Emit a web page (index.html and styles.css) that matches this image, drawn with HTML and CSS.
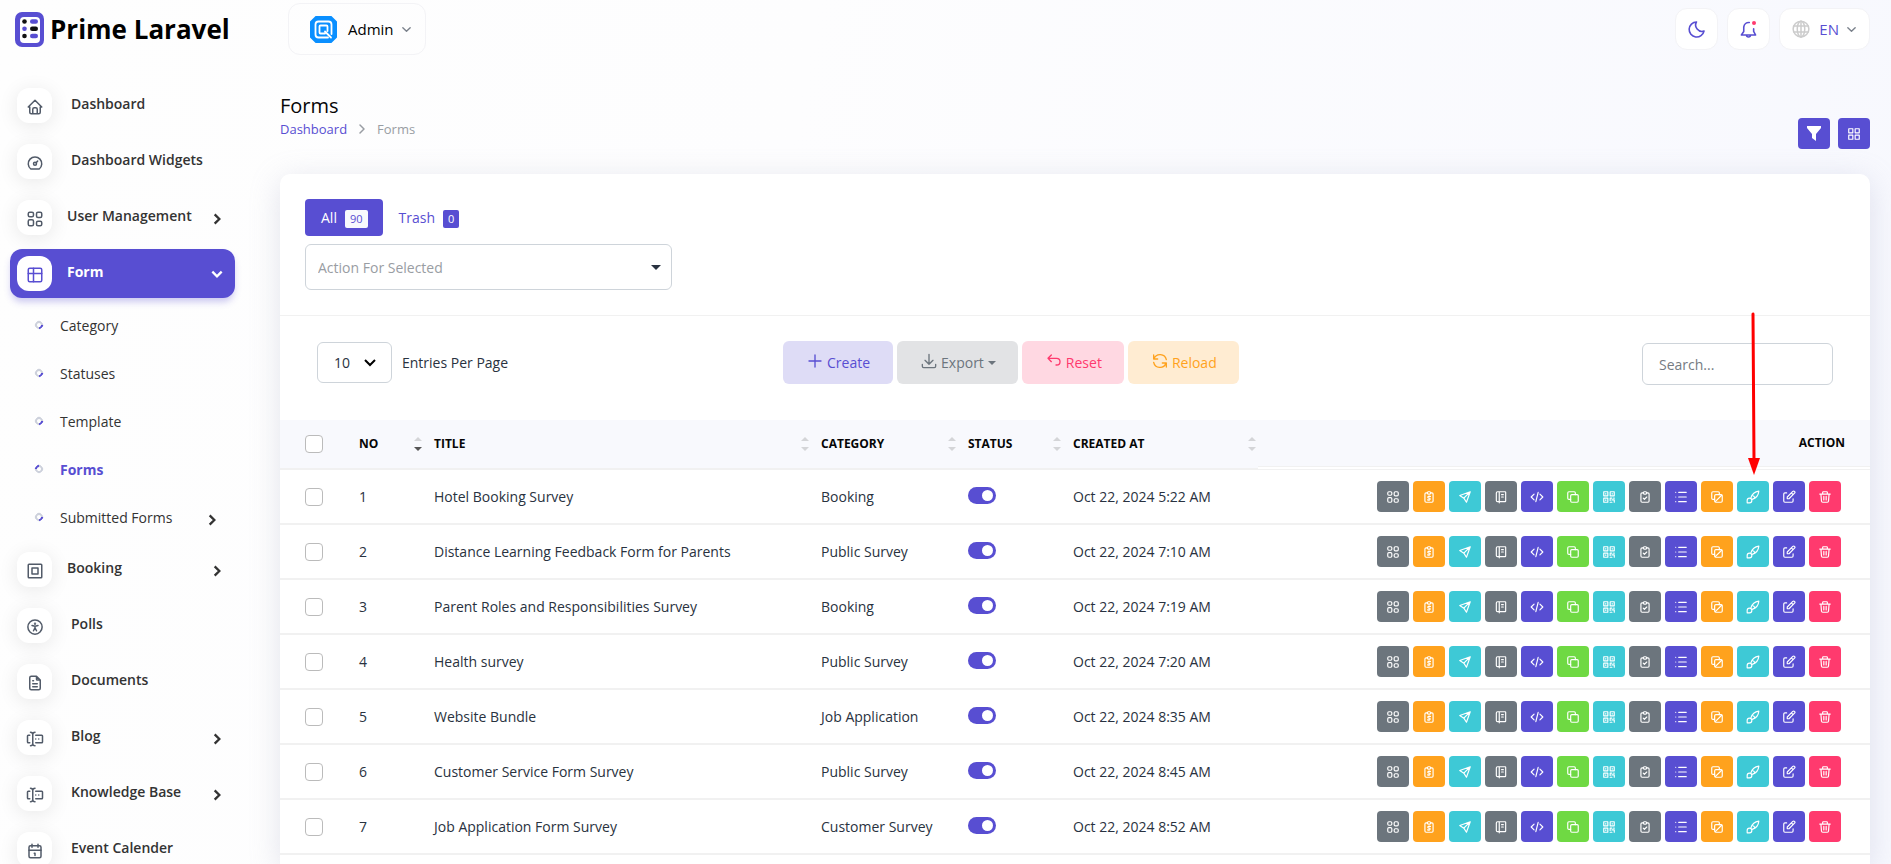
FILE: index.html
```
<!DOCTYPE html>
<html lang="en">
  <head>
    <meta charset="UTF-8" />
    <meta name="viewport" content="width=device-width, initial-scale=1.0" />
    <title>Forms | Prime Laravel</title>
    <link rel="stylesheet" href="styles.css">
  </head>
  <body>
    <!-- icon set -->
    <svg class="sprite" aria-hidden="true">
      <symbol id="home" viewBox="0 0 24 24"><path d="M5 12H3l9-9 9 9h-2M5 12v7a2 2 0 0 0 2 2h10a2 2 0 0 0 2-2v-7M9 21v-6a2 2 0 0 1 2-2h2a2 2 0 0 1 2 2v6"/></symbol>
      <symbol id="gauge" viewBox="0 0 24 24"><circle cx="12" cy="13" r="2"/><path d="M13.4 11.6l2.1-2.1M6.4 20a9 9 0 1 1 11.2 0z"/></symbol>
      <symbol id="users" viewBox="0 0 24 24"><rect x="3" y="3" width="7" height="6" rx="2"/><rect x="14" y="3" width="7" height="7" rx="2"/><rect x="3" y="13" width="7" height="8" rx="2"/><rect x="14" y="15" width="7" height="6" rx="2"/></symbol>
      <symbol id="table" viewBox="0 0 24 24"><rect x="3" y="3" width="18" height="18" rx="2"/><path d="M3 10h18M10 3v18"/></symbol>
      <symbol id="booking" viewBox="0 0 24 24"><rect x="3" y="3" width="18" height="18" rx="1"/><rect x="8" y="8" width="8" height="8"/></symbol>
      <symbol id="polls" viewBox="0 0 24 24"><circle cx="12" cy="12" r="9.500"/><path d="M10 17l2-4 2 4M8 10l4 1 4-1M12 11v2"/><circle cx="12" cy="7.500" r=".6"/></symbol>
      <symbol id="file" viewBox="0 0 24 24"><path d="M14 3v4a1 1 0 0 0 1 1h4M17 21H7a2 2 0 0 1-2-2V5a2 2 0 0 1 2-2h7l5 5v11a2 2 0 0 1-2 2zM9 9h1M9 13h6M9 17h6"/></symbol>
      <symbol id="forms" viewBox="0 0 24 24"><path d="M12 3a3 3 0 0 0-3 3v12a3 3 0 0 0 3 3M6 3a3 3 0 0 1 3 3v12a3 3 0 0 1-3 3M13 7h8a1 1 0 0 1 1 1v8a1 1 0 0 1-1 1h-8M5 7H3a1 1 0 0 0-1 1v8a1 1 0 0 0 1 1h2M17 12h.01M13 12h.01"/></symbol>
      <symbol id="calendar" viewBox="0 0 24 24"><rect x="4" y="5" width="16" height="16" rx="2"/><path d="M16 3v4M8 3v4M4 11h16M11 15h1v3"/></symbol>
      <symbol id="down" viewBox="0 0 24 24"><path d="M4 8l8 8 8-8"/></symbol>
      <symbol id="right" viewBox="0 0 24 24"><path d="M8 4l8 8-8 8"/></symbol>
      <symbol id="moon" viewBox="0 0 24 24"><path d="M12 2.500A9.500 9.500 0 1 0 21.500 14 8 8 0 0 1 12 2.500z"/></symbol>
      <symbol id="bell" viewBox="0 0 24 24"><path d="M13 3.200A6.500 6.500 0 0 0 6 9v5.500L3 19h18l-2.500-4.500V11M9.500 19a2.500 2.500 0 0 0 5 0"/></symbol>
      <symbol id="globe" viewBox="0 0 24 24"><circle cx="12" cy="12" r="10.500"/><ellipse cx="12" cy="12" rx="5" ry="10.500"/><path d="M12 1.500v21M2.500 8h19M2.500 16h19"/></symbol>
      <symbol id="grid" viewBox="0 0 24 24"><path d="M3 3h7v7H3zM14 3h7v7h-7zM3 14h7v7H3zM14 14h7v7h-7z"/></symbol>
      <symbol id="plus" viewBox="0 0 24 24"><path d="M12 3v18M3 12h18"/></symbol>
      <symbol id="download" viewBox="0 0 24 24"><path d="M2 17v3a2 2 0 0 0 2 2h16a2 2 0 0 0 2-2v-3M6 11l6 6 6-6M12 2v15"/></symbol>
      <symbol id="undo" viewBox="0 0 24 24"><path d="M8 13L3 8l5-5M3 8h13a5 5 0 0 1 0 10h-1"/></symbol>
      <symbol id="reload" viewBox="0 0 24 24"><path d="M21.500 10A9.700 9.700 0 0 0 3 8.500M2.500 3v6h6M2.500 14A9.700 9.700 0 0 0 21 15.500M21.500 21v-6h-6"/></symbol>
      <symbol id="money" viewBox="0 0 24 24"><path d="M9 5H7a2 2 0 0 0-2 2v12a2 2 0 0 0 2 2h10a2 2 0 0 0 2-2V7a2 2 0 0 0-2-2h-2"/><rect x="9" y="3" width="6" height="4" rx="2"/><path d="M14.500 11h-3a1.500 1.500 0 0 0 0 3h1a1.500 1.500 0 0 1 0 3h-3M12 17v1M12 10v1"/></symbol>
      <symbol id="send" viewBox="0 0 24 24"><path d="M10 14L21 3M21 3l-6.500 18-4.500-7-7-4.500z"/></symbol>
      <symbol id="notebook" viewBox="0 0 24 24"><path d="M6 3h13a1 1 0 0 1 1 1v15a1 1 0 0 1-1 1H6a2 2 0 0 1-2-2V5a2 2 0 0 1 2-2M9 3v19M13 8h3M13 12h3"/></symbol>
      <symbol id="code" viewBox="0 0 24 24"><path d="M7 7l-5 5 5 5M17 7l5 5-5 5M14 4l-4 16"/></symbol>
      <symbol id="copy" viewBox="0 0 24 24"><rect x="8" y="8" width="13" height="13" rx="2"/><path d="M16 8V5a2 2 0 0 0-2-2H5a2 2 0 0 0-2 2v9a2 2 0 0 0 2 2h3"/></symbol>
      <symbol id="qrcode" viewBox="0 0 24 24"><path d="M3 3h7v7H3zM14 3h7v7h-7zM3 14h7v7H3zM6.500 6v1M17.500 6v1M6.500 17v1M14 14h3M20 14h1M14 14v4M14 21h3M17 17h4v4"/></symbol>
      <symbol id="check" viewBox="0 0 24 24"><path d="M9 5H7a2 2 0 0 0-2 2v12a2 2 0 0 0 2 2h10a2 2 0 0 0 2-2V7a2 2 0 0 0-2-2h-2"/><rect x="9" y="3" width="6" height="4" rx="2"/><path d="M9 14l2 2 4-4"/></symbol>
      <symbol id="list" viewBox="0 0 24 24"><path d="M8 4h13M8 12h13M8 20h13M3 4h.01M3 12h.01M3 20h.01"/></symbol>
      <symbol id="layers" viewBox="0 0 24 24"><rect x="8" y="8" width="13" height="13" rx="2"/><path d="M16 8V5a2 2 0 0 0-2-2H5a2 2 0 0 0-2 2v9a2 2 0 0 0 2 2h3M9 20L20 9"/></symbol>
      <symbol id="brush" viewBox="0 0 24 24"><path d="M2 22v-4a4 4 0 1 1 4 4zM22 2A16 16 0 0 0 8.500 13.500M22 2A16 16 0 0 1 10.500 16M11 9a9 9 0 0 1 4.500 4.500"/></symbol>
      <symbol id="edit" viewBox="0 0 24 24"><path d="M8 5H5a2 2 0 0 0-2 2v12a2 2 0 0 0 2 2h12a2 2 0 0 0 2-2v-4M9 15h3l9.500-9.500a2.100 2.100 0 0 0-3-3L9 12zM16 5l3 3"/></symbol>
      <symbol id="trash" viewBox="0 0 24 24"><path d="M3 7h18M10 11v6M14 11v6M5 7l1 12a2 2 0 0 0 2 2h8a2 2 0 0 0 2-2l1-12M8 7V4a1 1 0 0 1 1-1h6a1 1 0 0 1 1 1v3"/></symbol>
    </svg>

    <div class="app">
      <aside class="sidebar">
        <a class="brand" href="#">
          <svg class="brand-icon" viewBox="0 0 29 35">
            <rect width="29" height="35" rx="7" fill="#584ed2"/>
            <rect x="5" y="5" width="20" height="26" rx="4" fill="#fff"/>
            <g fill="#111"><circle cx="9.500" cy="9.500" r="2.300"/><rect x="15" y="14.500" width="8" height="4.400" rx="2.200"/><circle cx="9.500" cy="24" r="2.300"/></g>
            <g fill="#584ed2"><rect x="15" y="7.300" width="8" height="4.400" rx="2.200"/><circle cx="9.500" cy="16.700" r="2.300"/><rect x="15" y="21.800" width="8" height="4.400" rx="2.200"/></g>
          </svg>
          <span>Prime Laravel</span>
        </a>
        <nav class="menu">
          <a class="menu-link" href="#"><span class="menu-icon"><svg><use href="#home"/></svg></span><span class="menu-text">Dashboard</span></a>
          <a class="menu-link" href="#"><span class="menu-icon"><svg><use href="#gauge"/></svg></span><span class="menu-text">Dashboard Widgets</span></a>
          <a class="menu-link tight" href="#"><span class="menu-icon"><svg><use href="#users"/></svg></span><span class="menu-text">User Management</span><svg class="arrow"><use href="#right"/></svg></a>
          <a class="menu-link tight active" href="#"><span class="menu-icon"><svg><use href="#table"/></svg></span><span class="menu-text">Form</span><svg class="arrow"><use href="#down"/></svg></a>
          <div class="submenu">
            <a href="#"><i class="dot"></i><span>Category</span></a>
            <a href="#"><i class="dot"></i><span>Statuses</span></a>
            <a href="#"><i class="dot"></i><span>Template</span></a>
            <a href="#" class="current"><i class="dot"></i><span>Forms</span></a>
            <a href="#"><i class="dot"></i><span>Submitted Forms</span><svg class="arrow"><use href="#right"/></svg></a>
          </div>
          <a class="menu-link tight" href="#"><span class="menu-icon"><svg><use href="#booking"/></svg></span><span class="menu-text">Booking</span><svg class="arrow"><use href="#right"/></svg></a>
          <a class="menu-link" href="#"><span class="menu-icon"><svg><use href="#polls"/></svg></span><span class="menu-text">Polls</span></a>
          <a class="menu-link" href="#"><span class="menu-icon"><svg><use href="#file"/></svg></span><span class="menu-text">Documents</span></a>
          <a class="menu-link" href="#"><span class="menu-icon"><svg><use href="#forms"/></svg></span><span class="menu-text">Blog</span><svg class="arrow"><use href="#right"/></svg></a>
          <a class="menu-link" href="#"><span class="menu-icon"><svg><use href="#forms"/></svg></span><span class="menu-text">Knowledge Base</span><svg class="arrow"><use href="#right"/></svg></a>
          <a class="menu-link" href="#"><span class="menu-icon"><svg><use href="#calendar"/></svg></span><span class="menu-text">Event Calender</span></a>
        </nav>
      </aside>

      <main class="main">
        <header class="topbar">
          <button class="top-btn user-btn">
            <svg class="avatar" viewBox="0 0 27 27">
              <path d="M7 0h13l7 7v13l-7 7H7l-7-7V7z" fill="#0a8fff" stroke="#0a8fff" stroke-linejoin="round"/>
              <path d="M21.500 18V8.500a3 3 0 0 0-3-3h-10a3 3 0 0 0-3 3v10a3 3 0 0 0 3 3H18" fill="none" stroke="#fff" stroke-width="1.800"/>
              <path d="M15 17.500H10.500a1 1 0 0 1-1-1v-6a1 1 0 0 1 1-1h6a1 1 0 0 1 1 1V15M15 15.500l6 6" fill="none" stroke="#fff" stroke-width="1.800"/>
            </svg>
            <span>Admin</span>
            <svg class="caret"><use href="#down"/></svg>
          </button>
          <div class="top-right">
            <button class="top-btn icon-btn" aria-label="Dark mode"><svg><use href="#moon"/></svg></button>
            <button class="top-btn icon-btn" aria-label="Notifications"><svg><use href="#bell"/></svg><span class="notify"></span></button>
            <button class="top-btn lang-btn"><svg class="globe"><use href="#globe"/></svg><span>EN</span><svg class="caret"><use href="#down"/></svg></button>
          </div>
        </header>

        <div class="page-header">
          <div class="page-title">
            <h1>Forms</h1>
            <nav class="breadcrumb"><a href="#">Dashboard</a><svg><use href="#right"/></svg><span>Forms</span></nav>
          </div>
          <div class="page-actions">
            <button class="act purple" aria-label="Filter"><svg class="filter" viewBox="0 0 14 15"><path d="M0 0h14v2L9 8v7l-4-3V8L0 2z"/></svg></button>
            <button class="act purple" aria-label="Grid view"><svg><use href="#grid"/></svg></button>
          </div>
        </div>

        <section class="card">
          <div class="card-top">
            <div class="tabs">
              <a class="tab selected" href="#">All <span class="badge">90</span></a>
              <a class="tab" href="#">Trash <span class="badge">0</span></a>
            </div>
            <select class="bulk" aria-label="Action For Selected">
              <option>Action For Selected</option>
            </select>
          </div>
          <div class="toolbar">
            <label class="entries">
              <select class="page-size">
                <option>10</option>
              </select>
              Entries Per Page
            </label>
            <div class="tools">
              <button class="tool create"><svg><use href="#plus"/></svg>Create</button>
              <button class="tool export"><svg><use href="#download"/></svg>Export<i class="tri"></i></button>
              <button class="tool reset"><svg><use href="#undo"/></svg>Reset</button>
              <button class="tool reload"><svg><use href="#reload"/></svg>Reload</button>
            </div>
            <div class="search"><input type="search" placeholder="Search..." aria-label="Search" /></div>
          </div>
          <table>
            <colgroup>
              <col class="c-check"><col class="c-no"><col><col class="c-cat"><col class="c-status"><col class="c-date"><col class="c-action">
            </colgroup>
            <thead>
              <tr>
                <th class="first"><input type="checkbox" class="tick" aria-label="Select all" /></th>
                <th><div class="sort desc">No</div></th>
                <th><div class="sort">Title</div></th>
                <th><div class="sort">Category</div></th>
                <th><div class="sort">Status</div></th>
                <th><div class="sort">Created At</div></th>
                <th class="action-head"><div>Action</div></th>
              </tr>
            </thead>
            <tbody id="rows"></tbody>
          </table>
          <svg class="pointer" viewBox="0 0 14 164"><path d="M6 2l1 146" stroke="#f00" stroke-width="3" stroke-linecap="round"/><path d="M1 146h12L7 163z" fill="#f00"/></svg>
        </section>
      </main>
    </div>

    <script>
      const forms = [
        ['Hotel Booking Survey', 'Booking', '5:22'],
        ['Distance Learning Feedback Form for Parents', 'Public Survey', '7:10'],
        ['Parent Roles and Responsibilities Survey', 'Booking', '7:19'],
        ['Health survey', 'Public Survey', '7:20'],
        ['Website Bundle', 'Job Application', '8:35'],
        ['Customer Service Form Survey', 'Public Survey', '8:45'],
        ['Job Application Form Survey', 'Customer Survey', '8:52'],
      ];
      const actions = [
        ['users', 'gray', 'Integration'],
        ['money', 'orange', 'Payment'],
        ['send', 'cyan', 'Send'],
        ['notebook', 'gray', 'Rules'],
        ['code', 'purple', 'Embed'],
        ['copy', 'green', 'Copy link'],
        ['qrcode', 'cyan', 'QR code'],
        ['check', 'gray', 'Fill form'],
        ['list', 'purple', 'Submissions'],
        ['layers', 'orange', 'Duplicate'],
        ['brush', 'cyan', 'Theme'],
        ['edit', 'purple', 'Edit'],
        ['trash', 'red', 'Delete'],
      ];

      const buttons = actions
        .map(([icon, color, label]) => `<button class="act ${color}" aria-label="${label}"><svg><use href="#${icon}"/></svg></button>`)
        .join('');

      document.getElementById('rows').innerHTML = forms
        .map(
          ([title, category, time], i) => `<tr>
            <td class="first"><input type="checkbox" class="tick" aria-label="Select ${title}" /></td>
            <td>${i + 1}</td>
            <td>${title}</td>
            <td>${category}</td>
            <td><input type="checkbox" class="switch" role="switch" aria-label="Status of ${title}" checked /></td>
            <td>Oct 22, 2024 ${time} AM</td>
            <td><div class="actions">${buttons}</div></td>
          </tr>`
        )
        .join('');
    </script>
  </body>
</html>
```
FILE: styles.css
```
* {
  box-sizing: border-box;
}
body {
  margin: 0;
  font-family: "Open Sans", sans-serif;
  font-size: 14px;
  color: #293240;
  background: linear-gradient(100deg, #fefefe 0%, #fdfdfe 40%, #f7f8fe 100%);
}
a {
  color: #584ed2;
  text-decoration: none;
}
button, input, select {
  font: inherit;
  color: inherit;
}
button {
  border: none;
  padding: 0;
  cursor: pointer;
}
svg {
  fill: none;
  stroke: currentColor;
  stroke-width: 2;
  stroke-linecap: round;
  stroke-linejoin: round;
  flex-shrink: 0;
}
.sprite {
  position: absolute;
  width: 0;
  height: 0;
}
.app {
  display: flex;
  height: 100vh;
  overflow: hidden;
}

/* sidebar */
.sidebar {
  width: 280px;
  flex-shrink: 0;
}
.brand {
  display: flex;
  align-items: center;
  gap: 6px;
  height: 81px;
  padding: 0 15px 23px;
  color: #000;
  font-size: 26px;
  font-weight: 700;
}
.brand-icon {
  width: 29px;
  height: 35px;
  stroke: none;
}
.menu {
  width: 235px;
  padding-left: 10px;
}
.menu-link {
  display: flex;
  align-items: center;
  gap: 19px;
  height: 49px;
  margin-bottom: 7px;
  padding: 0 11px 0 7px;
  border-radius: 12px;
  color: #333;
  font-weight: 600;
}
.menu-link.tight {
  gap: 15px;
}
.menu-icon {
  display: flex;
  align-items: center;
  justify-content: center;
  width: 35px;
  height: 35px;
  padding-top: 3px;
  border-radius: 12px;
  background: #fff;
  color: #525b69;
  box-shadow: 0 3px 20px rgba(0, 0, 0, 0.09);
}
.menu-icon svg {
  width: 18px;
  height: 18px;
}
.menu-text {
  flex: 1;
  padding-bottom: 5px;
}
.arrow {
  width: 14px;
  height: 14px;
  stroke-width: 4;
  margin-top: 3px;
  stroke-linecap: butt;
  stroke-linejoin: miter;
}
.menu-link.active {
  margin-bottom: 0;
  background: #584ed2;
  color: #fff;
  font-weight: 700;
  box-shadow: 0 5px 7px -1px rgba(88, 78, 210, 0.3);
}
.menu-link.active .menu-icon {
  color: #584ed2;
  box-shadow: none;
}
.menu-link.active .arrow {
  margin-top: 0;
}
.submenu {
  padding: 4px 0 3px;
}
.submenu a {
  display: flex;
  align-items: center;
  height: 48px;
  padding: 0 16px 2px 25px;
  color: #333;
  font-weight: 500;
}
.submenu .arrow {
  margin-left: auto;
  margin-top: 6px;
}
.dot {
  width: 8px;
  height: 8px;
  margin-right: 17px;
  border: 2px solid #cdd1dc;
  border-bottom-color: #584ed2;
  border-radius: 50%;
  transform: rotate(-45deg);
}
.submenu .current {
  color: #584ed2;
  font-weight: 700;
}
.current .dot {
  transform: rotate(135deg);
}

/* top bar */
.main {
  flex: 1;
  min-width: 0;
  display: flex;
  flex-direction: column;
  padding-right: 21px;
}
.topbar {
  display: flex;
  align-items: center;
  justify-content: space-between;
  height: 58px;
  padding-left: 8px;
}
.top-btn {
  display: flex;
  align-items: center;
  justify-content: center;
  height: 42px;
  border: 1px solid #f3f3f6;
  border-radius: 12px;
  background: #fff;
  color: #584ed2;
}
.user-btn {
  height: 52px;
  padding: 0 13px 0 21px;
  background: transparent;
  color: #000;
  font-size: 15px;
  font-weight: 500;
}
.avatar {
  width: 27px;
  height: 27px;
  margin-right: 11px;
}
.caret {
  width: 11px;
  height: 11px;
  margin-left: 7px;
  color: #7b828c;
  stroke-width: 3;
}
.top-right {
  display: flex;
  gap: 9px;
}
.icon-btn {
  position: relative;
  width: 43px;
}
.icon-btn svg {
  width: 19px;
  height: 19px;
}
.notify {
  position: absolute;
  top: 12px;
  right: 13px;
  width: 4px;
  height: 4px;
  border-radius: 50%;
  background: #ff3a6e;
}
.lang-btn {
  padding: 0 12px;
  font-size: 15px;
}
.globe {
  width: 18px;
  height: 18px;
  margin-right: 9px;
  color: #ccc;
}

/* page header */
.page-header {
  display: flex;
  align-items: flex-end;
  justify-content: space-between;
  height: 116px;
  padding-bottom: 25px;
}
.page-title {
  margin-bottom: 9px;
}
.page-title h1 {
  margin: 0;
  color: #060606;
  font-size: 20px;
  font-weight: 500;
  line-height: 24px;
}
.breadcrumb {
  display: flex;
  align-items: center;
  gap: 9px;
  font-size: 13px;
  line-height: 22px;
  color: #999da3;
}
.breadcrumb svg {
  width: 12px;
  height: 12px;
  stroke-width: 3;
}
.page-actions {
  display: flex;
  gap: 8px;
}
.act {
  display: flex;
  align-items: center;
  justify-content: center;
  width: 32px;
  height: 31px;
  border-radius: 4px;
  color: #fff;
}
.act svg {
  width: 14px;
  height: 14px;
}
.act .filter {
  width: 14px;
  height: 15px;
  fill: #fff;
  stroke: none;
}
.gray {
  background: #6c757d;
}
.orange {
  background: #ffa21d;
}
.cyan {
  background: #3ec9d6;
}
.purple {
  background: #584ed2;
}
.green {
  background: #6fd943;
}
.red {
  background: #ff3a6e;
}

/* card */
.card {
  position: relative;
  flex: 1;
  border-radius: 10px 10px 0 0;
  background: #fff;
  box-shadow: 0 6px 30px rgba(162, 166, 193, 0.3);
}
.card-top {
  padding: 25px;
  border-bottom: 1px solid #f1f1f1;
}
.tabs {
  display: flex;
  margin-bottom: 8px;
}
.tab {
  display: flex;
  align-items: center;
  gap: 8px;
  height: 37px;
  padding: 0 16px;
  border-radius: 4px;
}
.tab.selected {
  padding-right: 15px;
  background: #584ed2;
  color: #fff;
}
.badge {
  margin-top: 2px;
  padding: 0 5px;
  border-radius: 2px;
  background: #584ed2;
  color: #fff;
  font-size: 11px;
  line-height: 18px;
}
.selected .badge {
  background: #f8f9fd;
  color: #584ed2;
}
select {
  appearance: none;
  border: 1px solid #ced4da;
  border-radius: 6px;
  background: #fff no-repeat;
}
.bulk {
  display: block;
  width: 367px;
  height: 46px;
  padding: 0 12px;
  color: #999da3;
  background-image: url("data:image/svg+xml,%3Csvg xmlns='http://www.w3.org/2000/svg' width='10' height='5'%3E%3Cpath d='M0 0h10L5 5z' fill='%23293240'/%3E%3C/svg%3E");
  background-position: right 10px center;
}
.toolbar {
  display: grid;
  grid-template-columns: 466px auto 1fr;
  align-items: center;
  padding: 24px 37px 35px;
}
.entries {
  display: flex;
  align-items: center;
  gap: 10px;
}
.page-size {
  width: 75px;
  height: 41px;
  padding: 0 16px;
  background-image: url("data:image/svg+xml,%3Csvg xmlns='http://www.w3.org/2000/svg' width='12' height='8'%3E%3Cpath d='M1 1l5 5 5-5' fill='none' stroke='%23000' stroke-width='2'/%3E%3C/svg%3E");
  background-position: right 15px center;
}
.tools {
  display: flex;
  gap: 4px;
}
.tool {
  display: flex;
  align-items: center;
  height: 43px;
  padding: 0 22px 0 24px;
  border-radius: 6px;
}
.tool svg {
  width: 16px;
  height: 16px;
  margin: 0 4px 3px 0;
}
.create {
  padding-right: 23px;
  background: #dedcf6;
  color: #584ed2;
}
.export {
  background: #e2e3e5;
  color: #6c757d;
}
.reset {
  background: #ffd8e2;
  color: #ff3a6e;
}
.reload {
  background: #ffecd2;
  color: #ffa21d;
}
.tri {
  margin-left: 4px;
  border: 4px solid transparent;
  border-top-color: currentColor;
  border-bottom: none;
}
.search {
  justify-self: end;
  padding-top: 3px;
}
.search input {
  display: block;
  width: 191px;
  height: 42px;
  padding: 0 16px;
  border: 1px solid #ced4da;
  border-radius: 6px;
  background: #fff;
}
.search input::placeholder {
  color: #757b82;
}

/* table */
table {
  width: 100%;
  table-layout: fixed;
  border-collapse: separate;
  border-spacing: 0;
}
.c-check {
  width: 69px;
}
.c-no {
  width: 75px;
}
.c-cat {
  width: 147px;
}
.c-status {
  width: 105px;
}
.c-date {
  width: 195px;
}
.c-action {
  width: 612px;
}
th {
  height: 50px;
  padding: 0 0 0 10px;
  border-bottom: 2px solid #f1f1f1;
  background: #f8f9fd;
  color: #060606;
  font-size: 12px;
  font-weight: 700;
  text-align: left;
  text-transform: uppercase;
}
td {
  height: 55px;
  padding: 0 0 0 10px;
  border-bottom: 2px solid #f1f1f1;
}
th.first, td.first {
  padding-left: 25px;
}
.sort {
  display: flex;
  align-items: center;
  justify-content: space-between;
  padding: 0 2px 1px 0;
}
.sort::after {
  content: "";
  width: 8px;
  height: 14px;
  background: url("data:image/svg+xml,%3Csvg xmlns='http://www.w3.org/2000/svg' width='8' height='14'%3E%3Cpath d='M0 4l4-4 4 4zM0 10h8l-4 4z' fill='%23d4d5d8'/%3E%3C/svg%3E");
}
.sort.desc::after {
  background: url("data:image/svg+xml,%3Csvg xmlns='http://www.w3.org/2000/svg' width='8' height='14'%3E%3Cpath d='M0 4l4-4 4 4z' fill='%23d4d5d8'/%3E%3Cpath d='M0 10h8l-4 4z' fill='%23555'/%3E%3C/svg%3E");
}
.action-head {
  padding: 0;
  border-bottom-width: 1px;
  background: #fff;
  text-align: right;
}
.action-head div {
  height: 47px;
  margin-bottom: 2px;
  padding-right: 25px;
  border-bottom: 1px solid #f1f1f1;
  background: #f8f9fd;
  line-height: 46px;
}
.tick {
  appearance: none;
  display: block;
  width: 18px;
  height: 18px;
  margin: 0;
  border: 1px solid #bbb;
  border-radius: 4px;
  background: #fff;
}
.switch {
  appearance: none;
  display: flex;
  align-items: center;
  width: 28px;
  height: 17px;
  margin: 0 0 2px;
  padding: 0 3px;
  border-radius: 9px;
  background: #ced4da;
}
.switch::before {
  content: "";
  width: 11px;
  height: 11px;
  border-radius: 50%;
  background: #fff;
}
.switch:checked {
  justify-content: flex-end;
  background: #584ed2;
}
.actions {
  display: flex;
  justify-content: flex-end;
  gap: 4px;
  padding-right: 29px;
}

/* pointer laid over the table head */
.pointer {
  position: absolute;
  top: 138px;
  right: 109px;
  width: 14px;
  height: 164px;
  stroke: none;
  pointer-events: none;
}
```
